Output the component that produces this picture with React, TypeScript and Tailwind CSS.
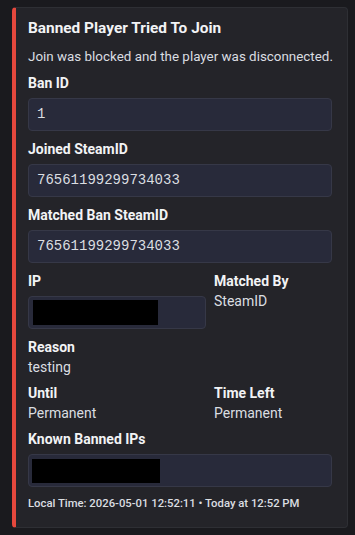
import React from "react";

const sans = "font-['Roboto','Noto_Sans',sans-serif]";
const mono = "font-['Liberation_Mono','DejaVu_Sans_Mono',monospace]";

function Label({ children }: { children: React.ReactNode }) {
  return <div className="text-[14px] leading-[18px] font-bold text-[#f2f3f5]">{children}</div>;
}

function Value({ children }: { children: React.ReactNode }) {
  return <div className="mt-[2px] text-[14px] leading-[18px] text-[#dbdee1]">{children}</div>;
}

function Code({ children }: { children?: React.ReactNode }) {
  return (
    <div
      className={`mt-[6px] mb-px h-[33px] flex items-center px-2 rounded-[4px] border border-[#363847] bg-[#282a3a] text-[14px] text-[#dbdee1] ${mono}`}
    >
      {children}
    </div>
  );
}

export default function App() {
  return (
    <div className={`w-[355px] h-[535px] bg-[#1a1a1e] pt-[7px] pl-3 ${sans}`}>
      <div className="w-[336px] h-[521px] rounded-[4px] border border-l-4 border-[#2e2f34] border-l-[#e5483d] bg-[#242429] pl-[12px] pr-[15px] pt-[10px] flex flex-col">
        <div className="text-[15.4px] leading-[20px] font-bold text-[#f2f3f5]">Banned Player Tried To Join</div>
        <div className="mt-[10px] text-[13.4px] leading-[18px] text-[#dbdee1] whitespace-nowrap">
          Join was blocked and the player was disconnected.
        </div>

        <div className="mt-2">
          <Label>Ban ID</Label>
          <Code>1</Code>
        </div>
        <div className="mt-2">
          <Label>Joined SteamID</Label>
          <Code>76561199299734033</Code>
        </div>
        <div className="mt-2">
          <Label>Matched Ban SteamID</Label>
          <Code>76561199299734033</Code>
        </div>

        <div className="mt-2 grid grid-cols-[178px_1fr] gap-x-2">
          <div>
            <Label>IP</Label>
            <Code>
              <div className="h-[25px] w-[125px] bg-black -ml-1" />
            </Code>
          </div>
          <div>
            <Label>Matched By</Label>
            <Value>SteamID</Value>
          </div>
        </div>

        <div className="mt-2">
          <Label>Reason</Label>
          <Value>testing</Value>
        </div>

        <div className="mt-2 grid grid-cols-[178px_1fr] gap-x-2">
          <div>
            <Label>Until</Label>
            <Value>Permanent</Value>
          </div>
          <div>
            <Label>Time Left</Label>
            <Value>Permanent</Value>
          </div>
        </div>

        <div className="mt-2">
          <Label>Known Banned IPs</Label>
          <Code>
            <div className="h-[24px] w-[128px] bg-black -ml-[5px]" />
          </Code>
        </div>

        <div className="mt-2 text-[11.3px] leading-[16px] font-medium text-[#dbdee1]">
          Local Time: 2026-05-01 12:52:11 • Today at 12:52 PM
        </div>
      </div>
    </div>
  );
}
